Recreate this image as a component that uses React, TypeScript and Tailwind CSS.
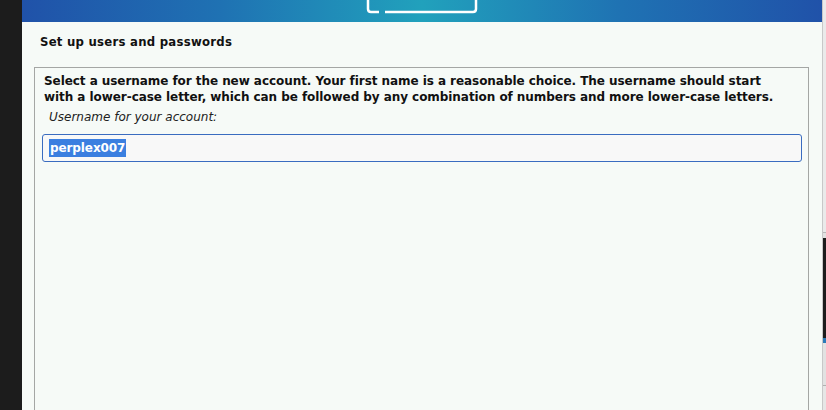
export default function App() {
  return (
    <div className="flex w-[826px] h-[410px] overflow-hidden bg-[#1c1c1c] font-['DejaVu_Sans',sans-serif]">
      {/* left dark strip */}
      <div className="w-[22px] shrink-0 bg-[#1c1c1c]" />

      {/* installer window */}
      <div className="w-[800px] shrink-0 flex flex-col bg-[#f6faf7]">
        {/* Banner */}
        <div className="h-[22px] shrink-0 flex justify-center bg-[linear-gradient(90deg,#2052a9_0%,#1f72b3_25%,#21a1bc_50%,#1f72b3_75%,#2052a9_100%)]">
          <svg width="112" height="22" viewBox="0 0 112 22" fill="none">
            <path
              d="M2 0 V9 Q2 12 5 12 H13"
              stroke="white"
              strokeWidth="2.5"
              strokeLinecap="butt"
            />
            <path
              d="M19 12 H107 Q110 12 110 9 V0"
              stroke="white"
              strokeWidth="2.5"
              strokeLinecap="butt"
            />
          </svg>
        </div>

        {/* Page title */}
        <div className="h-[40px] mb-[5px] shrink-0 flex items-center pl-[18px]">
          <h1 className="text-[13px] font-bold text-[#111] font-['DejaVu_Sans_Condensed','DejaVu_Sans',sans-serif] tracking-[0.25px]">
            Set up users and passwords
          </h1>
        </div>

        {/* Content box */}
        <div className="flex-1 ml-[12px] mr-[13px] border border-[#a4a6a4] border-b-0 pt-[5px]">
          <p className="pl-[9px] text-[12px] leading-[16px] font-bold text-[#111] whitespace-nowrap tracking-[-0.06px]">
            Select a username for the new account. Your first name is a reasonable choice. The username should start
            <br />
            with a lower-case letter, which can be followed by any combination of numbers and more lower-case letters.
          </p>
          <p className="pl-[14px] mt-[4px] text-[12px] leading-[16px] italic text-[#222]">
            Username for your account:
          </p>
          <div className="mt-[9px] ml-[7px] mr-[6px] h-[28px] rounded-[3px] border border-[#3a6cc0] bg-[#f8f8f8] flex items-center pl-[6px]">
            <span className="bg-[#3b7fe0] text-white text-[12px] font-bold leading-[18px] px-[1px] tracking-[-0.1px]">
              perplex007
            </span>
          </div>
        </div>
      </div>

      {/* background window edge */}
      <div className="w-[4px] shrink-0 flex flex-col bg-[#e6e6e6] border-l border-[#c8c8c8]">
        <div className="h-[232px] bg-[#eaeaea]" />
        <div className="h-[1px] bg-[#b8b8b8]" />
        <div className="h-[5px] bg-[#e2e2e2]" />
        <div className="h-[100px] bg-[#1c1c1c]" />
        <div className="h-[5px] bg-[#2a7ab8]" />
        <div className="h-[42px] bg-[#e2e2e2]" />
        <div className="h-[1px] bg-[#b0b0b0]" />
        <div className="flex-1 bg-[#e6e6e6]" />
      </div>
    </div>
  );
}
